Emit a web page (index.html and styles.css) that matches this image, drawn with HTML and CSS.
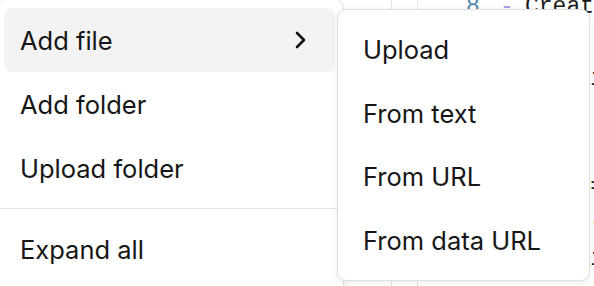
FILE: index.html
```html
<!DOCTYPE html>
<html lang="en">
<head>
<meta charset="utf-8">
<title>Menu</title>
<link rel="stylesheet" href="styles.css">
</head>
<body>
<div class="editor">
  <div class="pane-tree"></div>
  <div class="pane-gutter"></div>
  <div class="pane-code">
    <div class="code-line"><span class="ln">8</span><span class="bullet">-</span><span class="txt">Create a file</span></div>
    <div class="code-line"><span class="txt"> </span></div>
    <div class="code-line"><span class="txt">         i</span></div>
    <div class="code-line"><span class="txt">         :</span></div>
    <div class="code-line"><span class="txt"> </span></div>
    <div class="code-line"><span class="txt">         =</span></div>
    <div class="code-line"><span class="txt">         -</span></div>
    <div class="code-line"><span class="txt">         i</span></div>
  </div>
</div>

<div class="menu">
  <div class="menu-item is-active">
    <span class="label">Add file</span>
    <svg class="chev" width="24" height="24" viewBox="0 0 24 24" aria-hidden="true"><path d="M8 5 L15 12 L8 19" fill="none" stroke="#111" stroke-width="2.6" stroke-linecap="round" stroke-linejoin="round"/></svg>
  </div>
  <div class="menu-item"><span class="label">Add folder</span></div>
  <div class="menu-item"><span class="label">Upload folder</span></div>
  <div class="menu-sep"></div>
  <div class="menu-item"><span class="label">Expand all</span></div>
</div>

<div class="submenu">
  <div class="menu-item"><span class="label">Upload</span></div>
  <div class="menu-item"><span class="label">From text</span></div>
  <div class="menu-item"><span class="label">From URL</span></div>
  <div class="menu-item"><span class="label">From data URL</span></div>
</div>
</body>
</html>
```

FILE: styles.css
```css
html, body {
  margin: 0;
  padding: 0;
  background: #ffffff;
  width: 594px;
  height: 286px;
  overflow: hidden;
}

body {
  position: relative;
  font-family: "Inter", "Noto Sans", sans-serif;
  color: #161616;
}

.editor {
  display: flex;
  height: 286px;
}

.pane-tree {
  width: 391px;
  flex: none;
  border-right: 1px solid #e4e4e4;
}

.pane-gutter {
  width: 25px;
  flex: none;
  border-right: 1px solid #e4e4e4;
}

.pane-code {
  flex: 1;
  margin-top: -11px;
  padding-left: 48px;
  font-family: "Liberation Mono", monospace;
  font-size: 23px;
  line-height: 36px;
  overflow: hidden;
}

.code-line {
  display: flex;
  white-space: pre;
  height: 36px;
}

.ln {
  color: #4a86ad;
  width: 34px;
  flex: none;
}

.bullet {
  color: #a7a2e4;
  width: 25px;
  flex: none;
}

.txt {
  color: #1a1a1a;
}

.menu {
  position: absolute;
  left: -5px;
  top: -1px;
  width: 331px;
  height: 300px;
  padding: 8px;
  background: #ffffff;
  border: 1px solid #e2e2e2;
  border-radius: 9px;
  box-shadow: 0 2px 8px rgba(0, 0, 0, 0.06);
  display: flex;
  flex-direction: column;
}

.submenu {
  position: absolute;
  left: 337px;
  top: 9px;
  width: 235px;
  height: 254px;
  padding: 8px;
  background: #ffffff;
  border: 1px solid #dedede;
  border-radius: 9px;
  box-shadow: 0 2px 8px rgba(0, 0, 0, 0.07);
  display: flex;
  flex-direction: column;
}

.menu-item {
  height: 64px;
  flex: none;
  display: flex;
  align-items: center;
  justify-content: space-between;
  padding: 0 22px 0 16px;
  border-radius: 8px;
  font-size: 25.5px;
  font-weight: 400;
}

.submenu .menu-item {
  height: 63.5px;
  padding-left: 17px;
}

.menu-item.is-active {
  background: #f3f3f3;
}

.chev {
  flex: none;
}

.menu-sep {
  height: 1px;
  background: #e2e2e2;
  margin: 8px -8px;
  flex: none;
}
```
